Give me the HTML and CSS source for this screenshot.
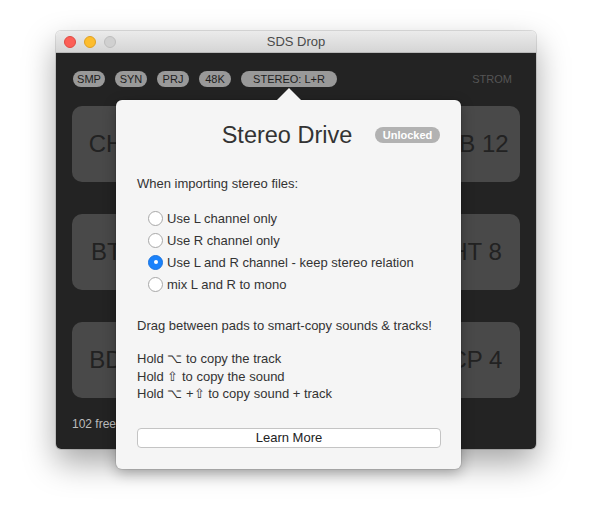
FILE: index.html
```html
<!DOCTYPE html>
<html>
<head>
<meta charset="utf-8">
<link rel="stylesheet" href="styles.css">
</head>
<body>
<div class="window">
  <div class="titlebar">
    <div class="lights">
      <span class="light red"></span>
      <span class="light yellow"></span>
      <span class="light gray"></span>
    </div>
    <div class="title">SDS Drop</div>
  </div>
  <div class="content">
    <div class="tags">
      <span class="tag">SMP</span>
      <span class="tag">SYN</span>
      <span class="tag">PRJ</span>
      <span class="tag">48K</span>
      <span class="tag wide">STEREO: L+R</span>
      <span class="strom">STROM</span>
    </div>
    <div class="pads">
      <div class="pad">CH 1</div>
      <div class="pad">OH 1</div>
      <div class="pad">SD 1</div>
      <div class="pad">SB 12</div>
      <div class="pad">BT 1</div>
      <div class="pad">LT 2</div>
      <div class="pad">MT 4</div>
      <div class="pad">HT 8</div>
      <div class="pad">BD 1</div>
      <div class="pad">RS 2</div>
      <div class="pad">CB 3</div>
      <div class="pad">CP 4</div>
    </div>
    <div class="footer">102 free</div>
  </div>
</div>

<div class="popover">
  <div class="arrow"></div>
  <div class="pop-head">
    <h1 class="pop-title">Stereo Drive</h1>
    <span class="badge">Unlocked</span>
  </div>
  <p class="intro">When importing stereo files:</p>
  <ul class="radios">
    <li class="radio"><span class="dot"></span>Use L channel only</li>
    <li class="radio"><span class="dot"></span>Use R channel only</li>
    <li class="radio on"><span class="dot"></span>Use L and R channel - keep stereo relation</li>
    <li class="radio"><span class="dot"></span>mix L and R to mono</li>
  </ul>
  <p class="drag">Drag between pads to smart-copy sounds &amp; tracks!</p>
  <div class="holds">
    <div class="hold">Hold ⌥ to copy the track</div>
    <div class="hold">Hold ⇧ to copy the sound</div>
    <div class="hold">Hold ⌥ +⇧ to copy sound + track</div>
  </div>
  <button class="learn">Learn More</button>
</div>
</body>
</html>
```

FILE: styles.css
```css
html, body {
  margin: 0;
  padding: 0;
  background: #ffffff;
  font-family: "Liberation Sans", Arial, sans-serif;
}
body {
  width: 592px;
  height: 530px;
  position: relative;
  overflow: hidden;
  padding-top: 31px;
  box-sizing: border-box;
}
.window {
  margin-left: 56px;
  width: 480px;
  height: 418px;
  border-radius: 5px;
  overflow: hidden;
  box-shadow: 0 14px 32px rgba(0,0,0,0.35), 0 0 0 1px rgba(0,0,0,0.12);
  display: flex;
  flex-direction: column;
}
.titlebar {
  height: 22px;
  flex: none;
  background: linear-gradient(#ebebeb, #d5d5d5);
  border-bottom: 1px solid #b8b8b8;
  box-sizing: border-box;
  position: relative;
  display: flex;
  align-items: center;
  justify-content: center;
}
.lights {
  position: absolute;
  left: 8px;
  top: 5px;
  display: flex;
  gap: 8px;
}
.light {
  width: 12px;
  height: 12px;
  border-radius: 50%;
  box-sizing: border-box;
}
.red { background: #fc5f57; border: 1px solid #de4a42; }
.yellow { background: #fdbd2e; border: 1px solid #dfa023; }
.gray { background: #d0d0d0; border: 1px solid #bdbdbd; }
.title {
  font-size: 13px;
  color: #4a4a4a;
}
.content {
  flex: 1;
  background: #232323;
  padding: 18px 16px 0 16px;
  display: flex;
  flex-direction: column;
}
.tags {
  display: flex;
  align-items: center;
  gap: 10px;
  height: 16px;
  padding-left: 1px;
}
.tag {
  background: #999999;
  color: #1e1e1e;
  font-size: 11px;
  height: 16px;
  line-height: 16px;
  width: 32px;
  text-align: center;
  border-radius: 8px;
}
.tag.wide { width: 96px; }
.strom {
  margin-left: auto;
  margin-right: 8px;
  color: #555555;
  font-size: 11px;
}
.pads {
  margin-top: 19px;
  display: grid;
  grid-template-columns: repeat(4, 1fr);
  grid-auto-rows: 76px;
  column-gap: 32px;
  row-gap: 32px;
}
.pad {
  background: #494949;
  border-radius: 10px;
  color: #222222;
  font-size: 24px;
  display: flex;
  align-items: center;
  justify-content: center;
  white-space: nowrap;
}
.footer {
  margin-top: 19px;
  color: #bcbcbc;
  font-size: 12px;
}
.popover {
  position: absolute;
  left: 116px;
  top: 100px;
  width: 345px;
  height: 369px;
  background: #f5f5f5;
  border-radius: 6px;
  box-shadow: 0 4px 14px rgba(0,0,0,0.3), 0 0 0 1px rgba(0,0,0,0.08);
  box-sizing: border-box;
  padding: 0 20px 0 21px;
  color: #333333;
  font-size: 13px;
}
.arrow {
  position: absolute;
  left: 161px;
  top: -12px;
  width: 0;
  height: 0;
  border-left: 12px solid transparent;
  border-right: 12px solid transparent;
  border-bottom: 12px solid #f5f5f5;
}
.pop-head {
  display: flex;
  align-items: center;
  height: 70px;
  position: relative;
  justify-content: center;
}
.pop-title {
  margin: 0;
  font-weight: normal;
  font-size: 23.5px;
  color: #333333;
  padding-right: 4px;
}
.badge {
  position: absolute;
  right: 1px;
  top: 27px;
  width: 65px;
  height: 16px;
  line-height: 16px;
  border-radius: 8px;
  background: #b2b2b2;
  color: #ffffff;
  font-size: 11px;
  font-weight: bold;
  text-align: center;
}
.intro {
  margin: 6px 0 0 0;
  line-height: 16px;
}
.radios {
  list-style: none;
  margin: 15px 0 0 0;
  padding: 0 0 0 11px;
}
.radio {
  height: 22px;
  display: flex;
  align-items: center;
  gap: 4px;
}
.dot {
  width: 15px;
  height: 15px;
  border-radius: 50%;
  background: #ffffff;
  border: 1px solid #a8a8a8;
  box-sizing: border-box;
  flex: none;
}
.radio.on .dot {
  background: #1a82fb;
  border-color: #1a74e0;
  position: relative;
}
.radio.on .dot::after {
  content: "";
  position: absolute;
  left: 4.5px;
  top: 4.5px;
  width: 4px;
  height: 4px;
  border-radius: 50%;
  background: #ffffff;
}
.drag {
  margin: 22px 0 0 0;
  line-height: 17px;
}
.holds {
  margin-top: 16px;
}
.hold {
  height: 17.5px;
  line-height: 17.5px;
}
.learn {
  display: block;
  margin-top: 25px;
  width: 304px;
  height: 20px;
  background: #ffffff;
  border: 1px solid #c4c4c4;
  border-radius: 4px;
  font-family: "Liberation Sans", Arial, sans-serif;
  font-size: 13px;
  color: #222222;
  padding: 0;
  margin-left: 0;
}
```
